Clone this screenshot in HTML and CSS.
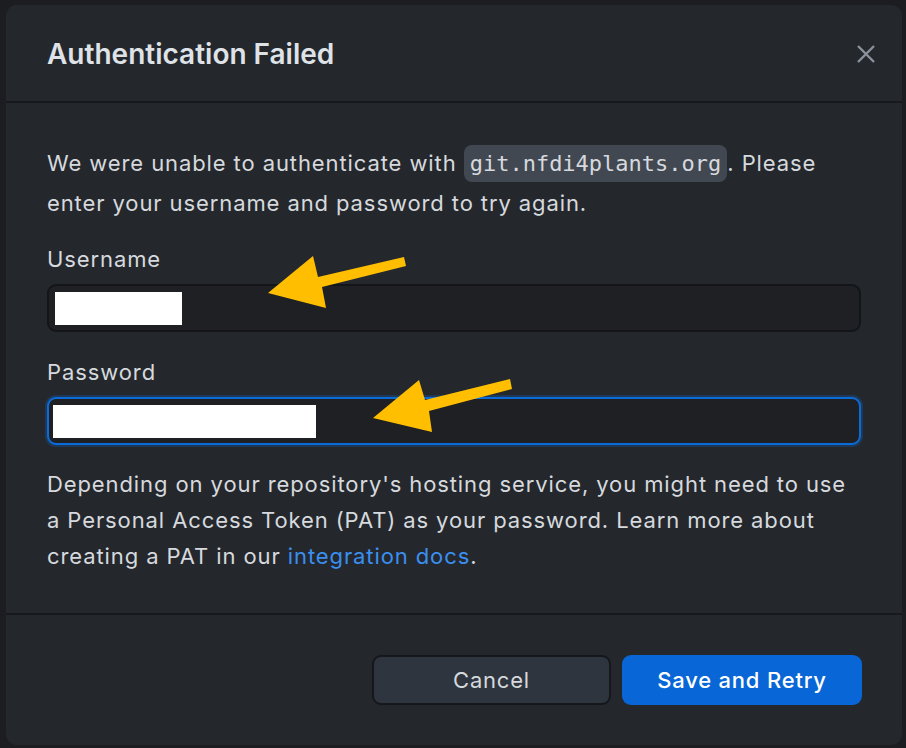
FILE: index.html
```html
<!DOCTYPE html>
<html>
<head>
<meta charset="utf-8">
<link rel="stylesheet" href="styles.css">
</head>
<body>
<div class="dialog">
  <div class="header">
    <h1 class="title">Authentication Failed</h1>
    <button class="close" aria-label="Close">
      <svg width="20" height="20" viewBox="0 0 20 20"><path d="M2 2 L18 18 M18 2 L2 18" stroke="#8b929b" stroke-width="2.4" stroke-linecap="butt"/></svg>
    </button>
  </div>
  <div class="body">
    <p class="text">We were unable to authenticate with <code class="chip">git.nfdi4plants.org</code>. Please enter your username and password to try again.</p>
    <label class="label first">Username</label>
    <div class="input"><span class="redact redact-user"></span></div>
    <label class="label">Password</label>
    <div class="input focused"><span class="redact redact-pass"></span></div>
    <p class="text note">Depending on your repository's hosting service, you might need to use a Personal Access Token (PAT) as your password. Learn more about creating a PAT in our <a class="link" href="#">integration docs</a>.</p>
  </div>
  <div class="footer">
    <button class="btn cancel">Cancel</button>
    <button class="btn primary">Save and Retry</button>
  </div>
  <svg class="arrows" width="906" height="748" viewBox="0 0 906 748">
    <polygon points="404,257 406,266 322,287 326,308 268,293 313,256 318,277" fill="#ffbf00"/>
    <polygon points="510,379 512,389 429,411 432,432 373,418 419,380 425,400" fill="#ffbf00"/>
  </svg>
</div>
</body>
</html>
```
FILE: styles.css
```css
html, body {
  margin: 0;
  padding: 0;
  background: #1b1d20;
  width: 906px;
  height: 748px;
  overflow: hidden;
}
body {
  font-family: Inter, "Noto Sans", sans-serif;
  color: #d6d9dd;
}
.dialog {
  position: relative;
  margin: 5px 4px 0 6px;
  width: 896px;
  height: 740px;
  box-sizing: border-box;
  background: #24282d;
  border-radius: 11px;
  display: flex;
  flex-direction: column;
}
.header {
  height: 98px;
  box-sizing: border-box;
  border-bottom: 2px solid #17191c;
  display: flex;
  align-items: center;
  justify-content: space-between;
  padding: 2px 26px 0 41px;
}
.title {
  margin: 0;
  font-size: 28px;
  font-weight: 600;
  color: #dfe2e6;
}
.close {
  background: none;
  border: 0;
  padding: 0;
  width: 20px;
  height: 20px;
  display: flex;
}
.body {
  height: 512px;
  box-sizing: border-box;
  border-bottom: 2px solid #17191c;
  padding: 40px 41px 0 41px;
  display: flex;
  flex-direction: column;
}
.text {
  margin: 0;
  font-size: 22px;
  letter-spacing: 0.9px;
  line-height: 40px;
}
.chip {
  font-family: "DejaVu Sans Mono", monospace;
  font-size: 22px;
  letter-spacing: 0;
  line-height: 1;
  background: #414852;
  border-radius: 8px;
  padding: 6px 6px;
  color: #d6d9dd;
}
.label {
  font-size: 22px;
  letter-spacing: 0.9px;
  line-height: 26px;
  margin-bottom: 12px;
}
.label.first { margin-top: 23px; }
.input {
  height: 48px;
  box-sizing: border-box;
  background: #1e2024;
  border: 2px solid #141518;
  border-radius: 9px;
  padding: 5px 6px;
  display: flex;
  align-items: center;
  margin-bottom: 27px;
}
.input.focused {
  border-color: #0b6bd9;
  box-shadow: 0 0 0 2px rgba(11, 107, 217, 0.25);
  padding: 5px 4px;
  margin-bottom: 21px;
}
.redact {
  display: block;
  background: #ffffff;
  height: 33px;
}
.redact-user { width: 127px; }
.redact-pass { width: 263px; }
.note { line-height: 36px; }
.link {
  color: #3b8ff0;
  text-decoration: none;
}
.footer {
  flex: 1;
  display: flex;
  justify-content: flex-end;
  align-items: flex-start;
  gap: 11px;
  padding: 40px 40px 0 0;
}
.btn {
  height: 50px;
  font-family: Inter, "Noto Sans", sans-serif;
  font-size: 22px;
  letter-spacing: 0.8px;
  border-radius: 9px;
  padding: 0;
}
.cancel {
  width: 239px;
  background: #2f353e;
  border: 2px solid #15171a;
  color: #d6d9dd;
}
.primary {
  width: 240px;
  background: #0866d7;
  border: 0;
  color: #ffffff;
  font-weight: 500;
}
.arrows {
  position: absolute;
  left: -6px;
  top: -5px;
  pointer-events: none;
}
```
